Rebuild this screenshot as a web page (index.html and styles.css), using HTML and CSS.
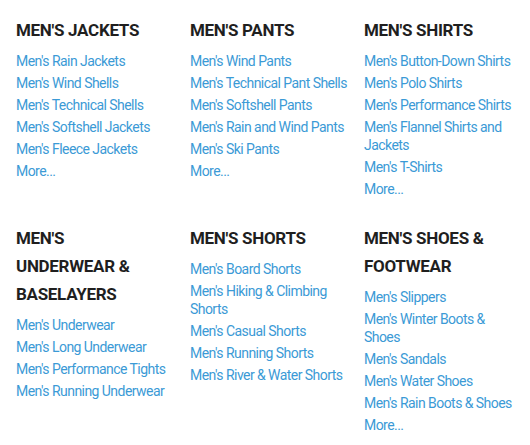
FILE: index.html
```html
<!DOCTYPE html>
<html lang="en">
<head>
  <meta charset="UTF-8" />
  <meta name="viewport" content="width=device-width, initial-scale=1.0" />
  <title>Men's Categories</title>
  <link rel="stylesheet" href="styles.css">
</head>
<body>
  <div class="grid">
    <div class="cat">
      <h3>Men's Jackets</h3>
      <a href="#">Men's Rain Jackets</a>
      <a href="#">Men's Wind Shells</a>
      <a href="#">Men's Technical Shells</a>
      <a href="#">Men's Softshell Jackets</a>
      <a href="#">Men's Fleece Jackets</a>
      <a href="#">More...</a>
    </div>
    <div class="cat">
      <h3>Men's Pants</h3>
      <a href="#">Men's Wind Pants</a>
      <a href="#">Men's Technical Pant Shells</a>
      <a href="#">Men's Softshell Pants</a>
      <a href="#">Men's Rain and Wind Pants</a>
      <a href="#">Men's Ski Pants</a>
      <a href="#">More...</a>
    </div>
    <div class="cat">
      <h3>Men's Shirts</h3>
      <a href="#">Men's Button-Down Shirts</a>
      <a href="#">Men's Polo Shirts</a>
      <a href="#">Men's Performance Shirts</a>
      <a href="#">Men's Flannel Shirts and Jackets</a>
      <a href="#">Men's T-Shirts</a>
      <a href="#">More...</a>
    </div>
    <div class="cat">
      <h3>Men's Underwear &amp; Baselayers</h3>
      <a href="#">Men's Underwear</a>
      <a href="#">Men's Long Underwear</a>
      <a href="#">Men's Performance Tights</a>
      <a href="#">Men's Running Underwear</a>
    </div>
    <div class="cat">
      <h3>Men's Shorts</h3>
      <a href="#">Men's Board Shorts</a>
      <a href="#">Men's Hiking &amp; Climbing Shorts</a>
      <a href="#">Men's Casual Shorts</a>
      <a href="#">Men's Running Shorts</a>
      <a href="#">Men's River &amp; Water Shorts</a>
    </div>
    <div class="cat">
      <h3>Men's Shoes &amp; Footwear</h3>
      <a href="#">Men's Slippers</a>
      <a href="#">Men's Winter Boots &amp; Shoes</a>
      <a href="#">Men's Sandals</a>
      <a href="#">Men's Water Shoes</a>
      <a href="#">Men's Rain Boots &amp; Shoes</a>
      <a href="#">More...</a>
    </div>
  </div>
</body>
</html>
```

FILE: styles.css
```css
* { box-sizing: border-box; margin: 0; padding: 0; }
body {
  font-family: Roboto, "Liberation Sans", sans-serif;
  background: #fff;
  padding: 16px 16px 0 16px;
}
.grid {
  display: grid;
  grid-template-columns: repeat(3, 158px);
  column-gap: 16px;
  row-gap: 22px;
}
.cat h3 {
  max-width: 148px;
  font-size: 17px;
  font-weight: 700;
  line-height: 28px;
  color: #1f1f1f;
  text-transform: uppercase;
  letter-spacing: -0.3px;
  margin-bottom: 8px;
}
.cat a {
  display: block;
  font-size: 14px;
  line-height: 18px;
  letter-spacing: -0.55px;
  color: #3b9ad6;
  text-decoration: none;
  margin-bottom: 4px;
}
.cat a:hover {
  text-decoration: underline;
}
```
